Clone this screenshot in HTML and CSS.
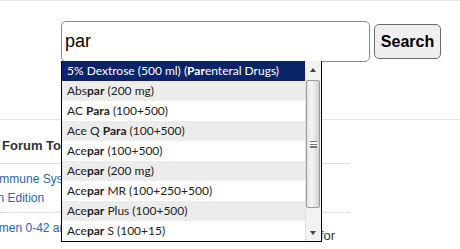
FILE: index.html
```html
<!DOCTYPE html>
<html lang="en">
<head>
  <meta charset="UTF-8">
  <title>Drug Search</title>
  <link rel="stylesheet" href="styles.css">
</head>
<body>
  <div class="topline"></div>

  <!-- Search bar with suggestions -->
  <div class="search-bar">
    <div class="search-field">
      <input type="text" class="search-input" value="par">
      <div class="suggest">
        <ul class="suggest-list">
          <li class="selected">5% Dextrose (500 ml) (<b>Par</b>enteral Drugs)</li>
          <li>Abs<b>par</b> (200 mg)</li>
          <li>AC <b>Para</b> (100+500)</li>
          <li>Ace Q <b>Para</b> (100+500)</li>
          <li>Ace<b>par</b> (100+500)</li>
          <li>Ace<b>par</b> (200 mg)</li>
          <li>Ace<b>par</b> MR (100+250+500)</li>
          <li>Ace<b>par</b> Plus (100+500)</li>
          <li>Ace<b>par</b> S (100+15)</li>
        </ul>
        <div class="scrollbar">
          <div class="arrow up"></div>
          <div class="thumb"><span class="grip"></span></div>
          <div class="arrow down"></div>
        </div>
      </div>
    </div>
    <button class="search-btn">Search</button>
  </div>

  <!-- Forum topics -->
  <div class="forum-section">
    <div class="forum">
      <div class="forum-head">Forum Topics</div>
      <div class="forum-row">
        <a href="#" class="topic shift-1">
          <span class="line">Immune System Disorders in</span>
          <span class="line shift-2">Women Edition</span>
        </a>
      </div>
      <div class="forum-row">
        <a href="#" class="topic shift-3">Women 0-42 are at risk</a>
        <span class="topic-note">Resources for</span>
      </div>
    </div>
  </div>
</body>
</html>
```

FILE: styles.css
```css
* {
  margin: 0;
  padding: 0;
  box-sizing: border-box;
}

body {
  background-color: #fff;
  font-family: Arial, "Liberation Sans", sans-serif;
  width: 460px;
  height: 249px;
  overflow: hidden;
}

.topline {
  height: 1px;
  background-color: #e6e6e6;
}

/* Search bar */
.search-bar {
  display: flex;
  align-items: center;
  margin-top: 20px;
  padding-left: 61px;
  gap: 4px;
}

.search-field {
  position: relative;
}

.search-input {
  display: block;
  width: 309px;
  height: 41px;
  border: 1px solid #8a8a8a;
  border-radius: 5px;
  padding: 0 3px;
  font-family: Arial, "Liberation Sans", sans-serif;
  font-size: 18px;
  color: #000;
  outline: none;
}

.search-btn {
  width: 67px;
  height: 35px;
  border: 1px solid #6b6b6b;
  border-radius: 5px;
  background-color: #efefef;
  font-family: Arial, "Liberation Sans", sans-serif;
  font-weight: bold;
  font-size: 16px;
  color: #000;
}

/* Suggestion dropdown */
.suggest {
  position: absolute;
  top: 40px;
  left: 0;
  z-index: 10;
  width: 261px;
  height: 181px;
  display: flex;
  background-color: #fff;
  border: 1px solid #000;
  border-top: none;
}

.suggest-list {
  list-style: none;
  flex: 1;
}

.suggest-list li {
  height: 20px;
  line-height: 20px;
  padding-left: 5px;
  font-family: Lato, sans-serif;
  font-size: 12px;
  color: #222;
  white-space: nowrap;
  overflow: hidden;
}

.suggest-list li:nth-child(even) {
  background-color: #ececec;
}

.suggest-list li.selected {
  background-color: #0a246a;
  color: #fff;
}

.scrollbar {
  width: 16px;
  display: flex;
  flex-direction: column;
  background-color: #f2f2f2;
  border-left: 1px solid #e2e2e2;
}

.arrow {
  height: 18px;
  position: relative;
}

.arrow::after {
  content: "";
  position: absolute;
  left: 4px;
  top: 7px;
  border-left: 3.5px solid transparent;
  border-right: 3.5px solid transparent;
}

.arrow.up::after {
  border-bottom: 4px solid #404040;
}

.arrow.down {
  margin-top: auto;
}

.arrow.down::after {
  top: 8px;
  border-top: 4px solid #404040;
}

.thumb {
  height: 128px;
  margin: 1px 1px 0 0;
  border: 1px solid #9a9a9a;
  border-radius: 2px;
  background: linear-gradient(to right, #e6e6e6, #f4f4f4 40%, #d2d2d2);
  display: flex;
  align-items: center;
  justify-content: center;
}

.grip {
  width: 7px;
  height: 7px;
  border-top: 1px solid #777;
  border-bottom: 1px solid #777;
  background: linear-gradient(#fff 0, #fff 2px, #777 2px, #777 3px, #fff 3px, #fff 4px, #777 4px, #777 5px, #fff 5px);
}

/* Forum topics */
.forum-section {
  margin-top: 57px;
  border-top: 1px solid #e2e2e2;
}

.forum {
  width: 350px;
}

.forum-head {
  height: 44px;
  padding: 18px 0 0 2px;
  line-height: 16px;
  font-size: 13px;
  font-weight: bold;
  color: #333;
  border-bottom: 1px solid #dcdcdc;
}

.forum-row {
  display: flex;
  justify-content: space-between;
  padding: 6px 0 4px;
  border-bottom: 1px dotted #c8c8c8;
}

.forum-row + .forum-row {
  padding-bottom: 5px;
}

.topic {
  display: block;
  font-size: 12px;
  line-height: 19px;
  color: #2b64b0;
  text-decoration: none;
}

.topic .line {
  display: block;
}

.shift-1 {
  margin-left: -4px;
}

.shift-2 {
  margin-left: -33px;
}

.shift-3 {
  margin-left: -19px;
}

.topic-note {
  margin: 7px 15px 0 0;
  font-size: 13px;
  line-height: 19px;
  color: #333;
}
```
